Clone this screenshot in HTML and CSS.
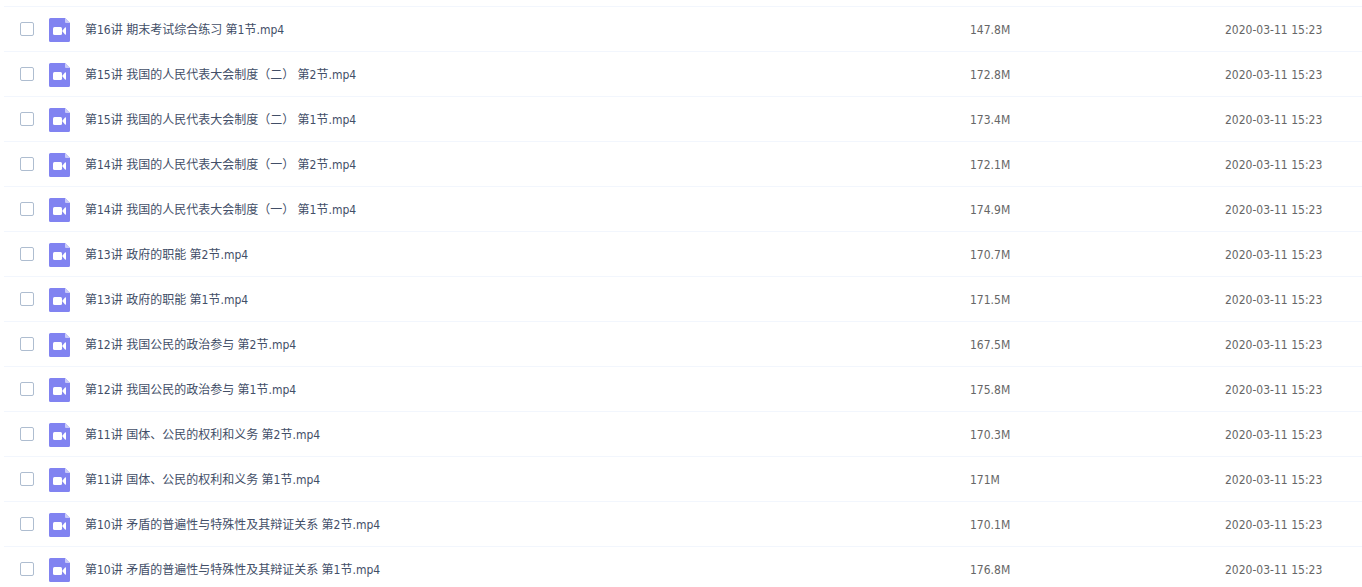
FILE: index.html
```html
<!DOCTYPE html>
<html lang="zh-CN">
<head>
  <meta charset="UTF-8">
  <meta name="viewport" content="width=device-width, initial-scale=1.0">
  <title>文件列表</title>
  <link rel="stylesheet" href="styles.css">
</head>
<body>
  <!-- video file icon, used by every row -->
  <svg class="icon-defs" width="0" height="0" aria-hidden="true">
    <symbol id="video-icon" viewBox="0 0 21 24">
      <path fill="#8183f1" d="M1.500 0H16l5 5v17.500a1.500 1.500 0 0 1-1.500 1.500h-18A1.500 1.500 0 0 1 0 22.500v-21A1.500 1.500 0 0 1 1.500 0z"/>
      <path fill="#c9caf9" d="M16 0l5 5h-4a1 1 0 0 1-1-1z"/>
      <rect fill="#fff" x="4" y="9" width="9" height="8" rx="1.500"/>
      <path fill="#fff" d="M13.500 12.500L16 9.500q1-.8 1 .5v6q0 1.300-1 .5l-2.500-3z"/>
    </symbol>
  </svg>
  <table class="file-list">
    <colgroup>
      <col class="col-check">
      <col class="col-name">
      <col class="col-size">
      <col class="col-date">
    </colgroup>
    <tbody>
      <tr>
        <td class="pick"><input type="checkbox" class="check" id="f1"></td>
        <td><label class="name" for="f1"><svg class="icon"><use href="#video-icon"/></svg>第16讲 期末考试综合练习 第1节.mp4</label></td>
        <td>147.8M</td>
        <td>2020-03-11 15:23</td>
      </tr>
      <tr>
        <td class="pick"><input type="checkbox" class="check" id="f2"></td>
        <td><label class="name" for="f2"><svg class="icon"><use href="#video-icon"/></svg>第15讲 我国的人民代表大会制度（二） 第2节.mp4</label></td>
        <td>172.8M</td>
        <td>2020-03-11 15:23</td>
      </tr>
      <tr>
        <td class="pick"><input type="checkbox" class="check" id="f3"></td>
        <td><label class="name" for="f3"><svg class="icon"><use href="#video-icon"/></svg>第15讲 我国的人民代表大会制度（二） 第1节.mp4</label></td>
        <td>173.4M</td>
        <td>2020-03-11 15:23</td>
      </tr>
      <tr>
        <td class="pick"><input type="checkbox" class="check" id="f4"></td>
        <td><label class="name" for="f4"><svg class="icon"><use href="#video-icon"/></svg>第14讲 我国的人民代表大会制度（一） 第2节.mp4</label></td>
        <td>172.1M</td>
        <td>2020-03-11 15:23</td>
      </tr>
      <tr>
        <td class="pick"><input type="checkbox" class="check" id="f5"></td>
        <td><label class="name" for="f5"><svg class="icon"><use href="#video-icon"/></svg>第14讲 我国的人民代表大会制度（一） 第1节.mp4</label></td>
        <td>174.9M</td>
        <td>2020-03-11 15:23</td>
      </tr>
      <tr>
        <td class="pick"><input type="checkbox" class="check" id="f6"></td>
        <td><label class="name" for="f6"><svg class="icon"><use href="#video-icon"/></svg>第13讲 政府的职能 第2节.mp4</label></td>
        <td>170.7M</td>
        <td>2020-03-11 15:23</td>
      </tr>
      <tr>
        <td class="pick"><input type="checkbox" class="check" id="f7"></td>
        <td><label class="name" for="f7"><svg class="icon"><use href="#video-icon"/></svg>第13讲 政府的职能 第1节.mp4</label></td>
        <td>171.5M</td>
        <td>2020-03-11 15:23</td>
      </tr>
      <tr>
        <td class="pick"><input type="checkbox" class="check" id="f8"></td>
        <td><label class="name" for="f8"><svg class="icon"><use href="#video-icon"/></svg>第12讲 我国公民的政治参与 第2节.mp4</label></td>
        <td>167.5M</td>
        <td>2020-03-11 15:23</td>
      </tr>
      <tr>
        <td class="pick"><input type="checkbox" class="check" id="f9"></td>
        <td><label class="name" for="f9"><svg class="icon"><use href="#video-icon"/></svg>第12讲 我国公民的政治参与 第1节.mp4</label></td>
        <td>175.8M</td>
        <td>2020-03-11 15:23</td>
      </tr>
      <tr>
        <td class="pick"><input type="checkbox" class="check" id="f10"></td>
        <td><label class="name" for="f10"><svg class="icon"><use href="#video-icon"/></svg>第11讲 国体、公民的权利和义务 第2节.mp4</label></td>
        <td>170.3M</td>
        <td>2020-03-11 15:23</td>
      </tr>
      <tr>
        <td class="pick"><input type="checkbox" class="check" id="f11"></td>
        <td><label class="name" for="f11"><svg class="icon"><use href="#video-icon"/></svg>第11讲 国体、公民的权利和义务 第1节.mp4</label></td>
        <td>171M</td>
        <td>2020-03-11 15:23</td>
      </tr>
      <tr>
        <td class="pick"><input type="checkbox" class="check" id="f12"></td>
        <td><label class="name" for="f12"><svg class="icon"><use href="#video-icon"/></svg>第10讲 矛盾的普遍性与特殊性及其辩证关系 第2节.mp4</label></td>
        <td>170.1M</td>
        <td>2020-03-11 15:23</td>
      </tr>
      <tr>
        <td class="pick"><input type="checkbox" class="check" id="f13"></td>
        <td><label class="name" for="f13"><svg class="icon"><use href="#video-icon"/></svg>第10讲 矛盾的普遍性与特殊性及其辩证关系 第1节.mp4</label></td>
        <td>176.8M</td>
        <td>2020-03-11 15:23</td>
      </tr>
    </tbody>
  </table>
</body>
</html>
```
FILE: styles.css
```css
body {
  margin: 0;
  padding: 6px 0 0 4px;
  background-color: #fff;
  color: #666;
  font-family: "DejaVu Sans Condensed", "Noto Sans", "Noto Sans CJK SC", sans-serif;
  font-size: 12px;
  line-height: 18px;
}
.icon-defs {
  display: block;
}
.file-list {
  width: 100%;
  table-layout: fixed;
  border-spacing: 0;
}
.col-check {
  width: 45px;
}
.col-size {
  width: 255px;
}
.col-date {
  width: 137px;
}
.file-list td {
  height: 42px;
  padding: 2px 0 0;
  border-top: 1px solid #f2f6fd;
  vertical-align: middle;
  white-space: nowrap;
}
.file-list .pick {
  height: 44px;
  padding: 0;
}
.check {
  display: block;
  appearance: none;
  box-sizing: border-box;
  width: 14px;
  height: 14px;
  margin: 0 0 0 16px;
  border: 1px solid #aebdd0;
  border-radius: 2px;
  background-color: #fff;
  cursor: pointer;
}
.check:checked {
  background-color: #8183f1;
}
.name {
  display: flex;
  align-items: center;
  gap: 15px;
  color: #424e67;
  cursor: pointer;
}
.icon {
  width: 21px;
  height: 24px;
  flex: none;
}
```
